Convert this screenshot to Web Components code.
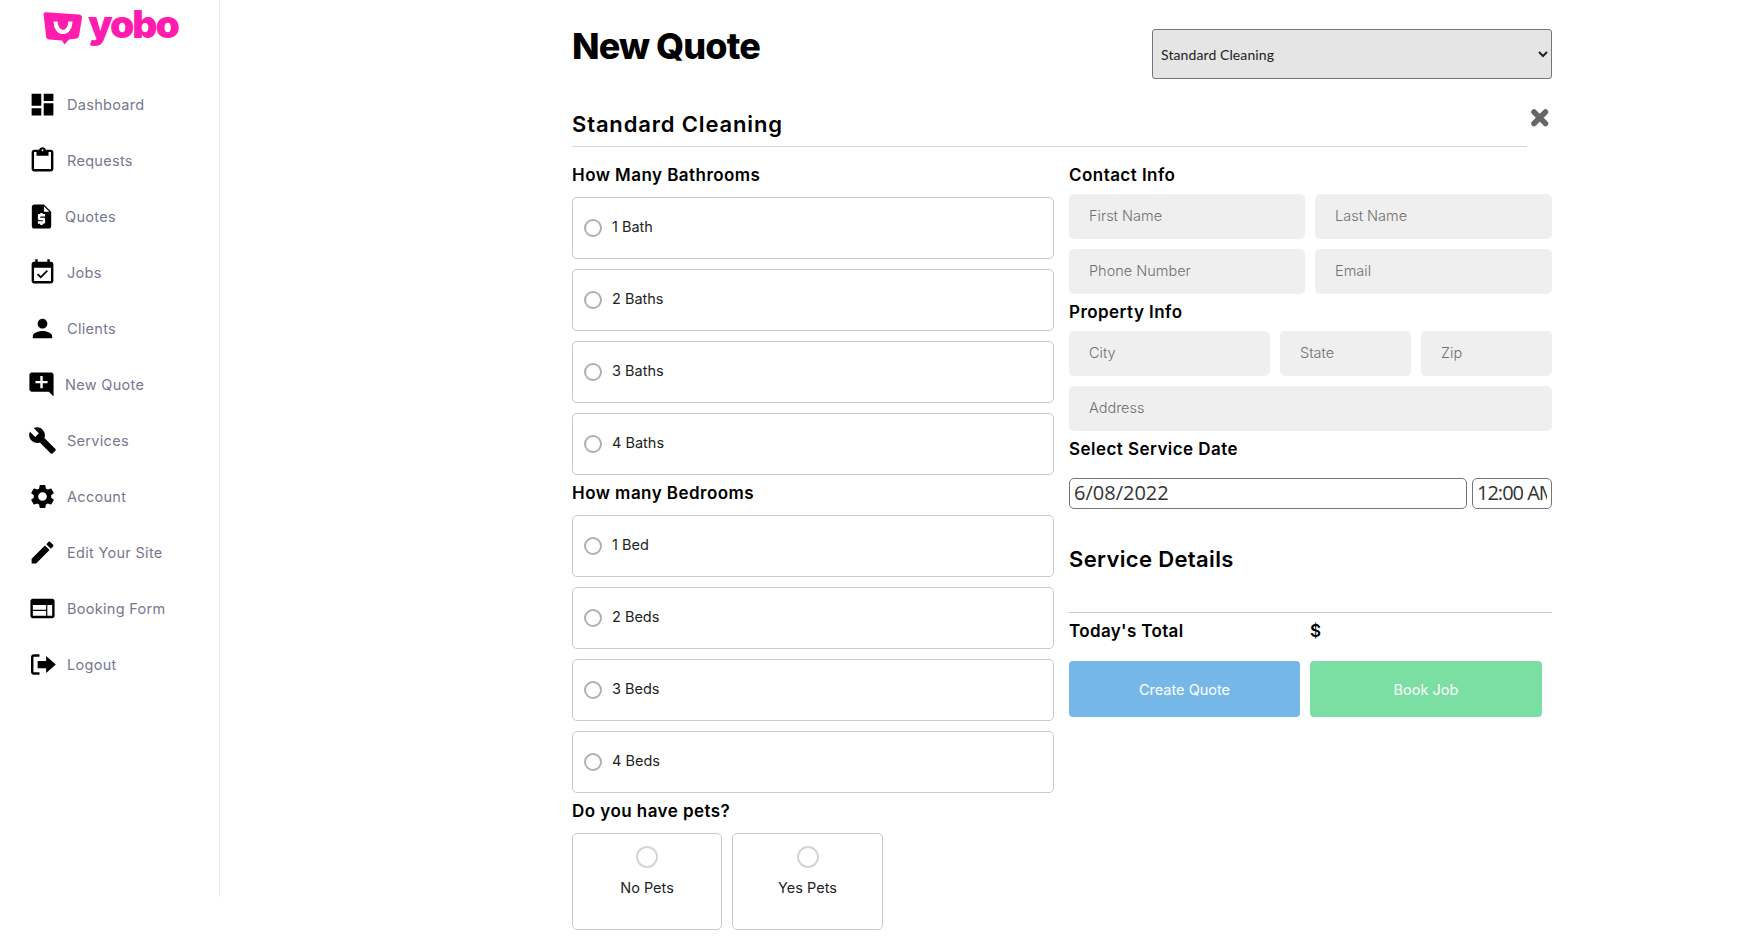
<!DOCTYPE html>
<html lang="en">
<head>
<meta charset="utf-8">
<title>New Quote</title>
<style>
  html, body { margin: 0; background: #fff; }
  body { display: flex; align-items: flex-start; font-family: Inter, "Liberation Sans", sans-serif; color: #000; }
</style>
</head>
<body>

<yb-sidebar>
  <yb-nav-item icon="dashboard">Dashboard</yb-nav-item>
  <yb-nav-item icon="requests">Requests</yb-nav-item>
  <yb-nav-item icon="quotes" tight>Quotes</yb-nav-item>
  <yb-nav-item icon="jobs">Jobs</yb-nav-item>
  <yb-nav-item icon="clients">Clients</yb-nav-item>
  <yb-nav-item icon="newquote" tight>New Quote</yb-nav-item>
  <yb-nav-item icon="services">Services</yb-nav-item>
  <yb-nav-item icon="account">Account</yb-nav-item>
  <yb-nav-item icon="edit">Edit Your Site</yb-nav-item>
  <yb-nav-item icon="booking">Booking Form</yb-nav-item>
  <yb-nav-item icon="logout">Logout</yb-nav-item>
</yb-sidebar>

<yb-quote-page>
  <yb-quote-header>New Quote</yb-quote-header>
  <yb-section-title>Standard Cleaning</yb-section-title>
  <yb-columns>
    <div slot="left">
      <yb-label first>How Many Bathrooms</yb-label>
      <yb-option>1 Bath</yb-option>
      <yb-option>2 Baths</yb-option>
      <yb-option>3 Baths</yb-option>
      <yb-option last>4 Baths</yb-option>
      <yb-label>How many Bedrooms</yb-label>
      <yb-option>1 Bed</yb-option>
      <yb-option>2 Beds</yb-option>
      <yb-option>3 Beds</yb-option>
      <yb-option last>4 Beds</yb-option>
      <yb-label>Do you have pets?</yb-label>
      <yb-pets>
        <yb-pet-card>No Pets</yb-pet-card>
        <yb-pet-card>Yes Pets</yb-pet-card>
      </yb-pets>
    </div>
    <div slot="right">
      <yb-label first tight>Contact Info</yb-label>
      <yb-field-row cols="236px 237px">
        <yb-field>First Name</yb-field>
        <yb-field>Last Name</yb-field>
        <yb-field>Phone Number</yb-field>
        <yb-field>Email</yb-field>
      </yb-field-row>
      <yb-label tight>Property Info</yb-label>
      <yb-field-row cols="201px 131px 131px">
        <yb-field>City</yb-field>
        <yb-field>State</yb-field>
        <yb-field>Zip</yb-field>
        <yb-field wide>Address</yb-field>
      </yb-field-row>
      <yb-label tight>Select Service Date</yb-label>
      <yb-date-row></yb-date-row>
      <yb-summary></yb-summary>
    </div>
  </yb-columns>
</yb-quote-page>

<script>
// iconos del menu lateral
const ICONS = {
  dashboard: 'M3 13h8V3H3v10zm0 8h8v-6H3v6zm10 0h8V11h-8v10zm0-18v6h8V3h-8z',
  requests: 'M19 3h-4.18C14.4 1.84 13.3 1 12 1s-2.4.84-2.82 2H5c-1.1 0-2 .9-2 2v14c0 1.1.9 2 2 2h14c1.1 0 2-.9 2-2V5c0-1.1-.9-2-2-2zm-7-.25c.41 0 .75.34.75.75s-.34.75-.75.75-.75-.34-.75-.75.34-.75.75-.75zM19 19H5V5h2v3h10V5h2v14z',
  quotes: 'M14 2H6c-1.1 0-1.99.9-1.99 2L4 20c0 1.1.89 2 1.99 2H18c1.1 0 2-.9 2-2V8l-6-6zm1 10h-4v1h3c.55 0 1 .45 1 1v3c0 .55-.45 1-1 1h-1v1h-2v-1H9v-2h4v-1h-3c-.55 0-1-.45-1-1v-3c0-.55.45-1 1-1h1V9h2v1h2v2zm-1-4V3.5L18.5 8H14z',
  jobs: 'M16.53 11.06L15.47 10l-4.88 4.88-2.12-2.12-1.06 1.06L10.59 17l5.94-5.94zM19 3h-1V1h-2v2H8V1H6v2H5c-1.11 0-1.99.9-1.99 2L3 19c0 1.1.89 2 2 2h14c1.1 0 2-.9 2-2V5c0-1.1-.9-2-2-2zm0 16H5V8h14v11z',
  clients: 'M12 12c2.21 0 4-1.79 4-4s-1.79-4-4-4-4 1.79-4 4 1.79 4 4 4zm0 2c-2.67 0-8 1.34-8 4v2h16v-2c0-2.66-5.33-4-8-4z',
  newquote: 'M21.99 4c0-1.1-.89-2-1.99-2H4c-1.1 0-2 .9-2 2v12c0 1.1.9 2 2 2h14l4 4-.01-18zM17 11h-4v4h-2v-4H7V9h4V5h2v4h4v2z',
  services: 'M22.7 19l-9.1-9.1c.9-2.3.4-5-1.5-6.9-2-2-5-2.4-7.4-1.3L9 6 6 9 1.6 4.7C.4 7.1.9 10.1 2.9 12.1c1.9 1.9 4.6 2.4 6.9 1.5l9.1 9.1c.4.4 1 .4 1.4 0l2.3-2.3c.5-.4.5-1.1.1-1.4z',
  account: 'M19.14 12.94c.04-.3.06-.61.06-.94 0-.32-.02-.64-.07-.94l2.03-1.58c.18-.14.23-.41.12-.61l-1.92-3.32c-.12-.22-.37-.29-.59-.22l-2.39.96c-.5-.38-1.03-.7-1.62-.94l-.36-2.54c-.04-.24-.24-.41-.48-.41h-3.84c-.24 0-.43.17-.47.41l-.36 2.54c-.59.24-1.13.57-1.62.94l-2.39-.96c-.22-.08-.47 0-.59.22L2.74 8.87c-.12.21-.08.47.12.61l2.03 1.58c-.05.3-.09.63-.09.94s.02.64.07.94l-2.03 1.58c-.18.14-.23.41-.12.61l1.92 3.32c.12.22.37.29.59.22l2.39-.96c.5.38 1.03.7 1.62.94l.36 2.54c.05.24.24.41.48.41h3.84c.24 0 .44-.17.47-.41l.36-2.54c.59-.24 1.13-.56 1.62-.94l2.39.96c.22.08.47 0 .59-.22l1.92-3.32c.12-.22.07-.47-.12-.61l-2.01-1.58zM12 15.6c-1.98 0-3.6-1.62-3.6-3.6s1.62-3.6 3.6-3.6 3.6 1.62 3.6 3.6-1.62 3.6-3.6 3.6z',
  edit: 'M3 17.25V21h3.75L17.81 9.94l-3.75-3.75L3 17.25zM20.71 7.04c.39-.39.39-1.02 0-1.41l-2.34-2.34c-.39-.39-1.02-.39-1.41 0l-1.83 1.83 3.75 3.75 1.83-1.83z',
  booking: 'M20 4H4c-1.1 0-1.99.9-1.99 2L2 18c0 1.1.9 2 2 2h16c1.1 0 2-.9 2-2V6c0-1.1-.9-2-2-2zm-5 14H4v-4h11v4zm0-5H4V9h11v4zm5 5h-4V9h4v9z',
  logout: 'M9.5 3.5H5A2.5 2.5 0 0 0 2.500 6v12A2.500 2.500 0 0 0 5 20.500h4.500v-2H5a.5.5 0 0 1-.5-.5V6a.5.5 0 0 1 .5-.5h4.500zM15 5l8 7-8 7v-4H8V9h7z'
};

function makeShadow(el, html) {
  el.attachShadow({ mode: 'open' }).innerHTML = html;
}

class YbSidebar extends HTMLElement {
  constructor() {
    super();
    makeShadow(this, `
      <style>
        :host { display: block; flex: none; width: 219px; height: 897px; border-right: 1px solid #eeeeee; box-sizing: content-box; }
        .logo { display: flex; align-items: flex-start; height: 66px; padding: 10px 0 0 43px; color: #ff1cae; }
        svg { display: block; flex: none; }
        .word { font: 900 39px/36px Inter, "Liberation Sans", sans-serif; letter-spacing: -2.100px; margin-left: 5px; margin-top: -4px; }
        nav { display: flex; flex-direction: column; }
      </style>
      <div class="logo">
        <svg width="40" height="36" viewBox="0 0 40 36">
          <path fill="#ff1cae" d="M0.500 4 Q0.500 2 3 2.200 L36 4.500 Q39.500 5 39 8 L36 26 Q35.500 28.500 32 28.800 L26 29.500 L21.500 34.500 L19 30.500 L6 29.500 Q3.500 29.200 3.200 27 Z"/>
          <path fill="none" stroke="#fff" stroke-width="4.200" d="M12.500 11.500 C13 25.500 27 25.500 27.500 11.500"/>
        </svg>
        <span class="word">yobo</span>
      </div>
      <nav><slot></slot></nav>
    `);
  }
}

class YbNavItem extends HTMLElement {
  constructor() {
    super();
    const tight = this.hasAttribute('tight');
    makeShadow(this, `
      <style>
        :host { display: flex; align-items: center; height: 56px; padding-left: 28px; color: #77778f; font: 400 14.500px Inter, "Liberation Sans", sans-serif; letter-spacing: .3px; }
        svg { display: block; flex: none; width: 29px; height: 29px; fill: #000; margin: 0 ${tight ? 9 : 10}px 0 ${tight ? -1 : 0}px; }
      </style>
      <svg viewBox="0 0 24 24"><path d="${ICONS[this.getAttribute('icon')]}"/></svg>
      <slot></slot>
    `);
  }
}

class YbQuotePage extends HTMLElement {
  constructor() {
    super();
    makeShadow(this, `
      <style>
        :host { display: block; flex: none; width: 980px; margin-left: 352px; }
      </style>
      <slot></slot>
    `);
  }
}

class YbQuoteHeader extends HTMLElement {
  constructor() {
    super();
    makeShadow(this, `
      <style>
        :host { display: flex; justify-content: space-between; align-items: flex-start; height: 79px; padding-top: 29px; box-sizing: border-box; }
        h1 { margin: -5px 0 0; font: 800 36px/44px Inter, "Liberation Sans", sans-serif; letter-spacing: -.9px; }
        select { width: 400px; height: 50px; padding-left: 4px; background: #e5e5e5; border: 1px solid #767676; border-radius: 3px; color: #222; font: 400 14px Lato, sans-serif; letter-spacing: .1px; }
      </style>
      <h1><slot></slot></h1>
      <select><option>Standard Cleaning</option></select>
    `);
  }
}

class YbSectionTitle extends HTMLElement {
  constructor() {
    super();
    makeShadow(this, `
      <style>
        :host { display: flex; align-items: flex-start; width: 980px; height: 68px; }
        .line { width: 955px; height: 67px; border-bottom: 1px solid #d6d6d6; box-sizing: content-box; }
        h2 { margin: 31px 0 0; font: 600 22px/28px Inter, "Liberation Sans", sans-serif; letter-spacing: .85px; }
        svg { flex: none; margin: 29px 0 0 3px; }
      </style>
      <div class="line"><h2><slot></slot></h2></div>
      <svg width="20" height="20" viewBox="0 0 20 20">
        <path fill="none" stroke="#666" stroke-width="5.500" stroke-linecap="round" d="M4 4 L15.500 15.500 M15.500 4 L4 15.500"/>
      </svg>
    `);
  }
}

class YbColumns extends HTMLElement {
  constructor() {
    super();
    makeShadow(this, `
      <style>
        :host { display: grid; grid-template-columns: 482px 483px; column-gap: 15px; }
      </style>
      <slot name="left"></slot>
      <slot name="right"></slot>
    `);
  }
}

class YbLabel extends HTMLElement {
  constructor() {
    super();
    const first = this.hasAttribute('first');
    const tight = this.hasAttribute('tight');
    makeShadow(this, `
      <style>
        :host { display: block; font: 600 17px/24px Inter, "Liberation Sans", sans-serif; letter-spacing: .45px; margin-top: ${first ? 16 : 6}px; margin-bottom: ${tight ? 7 : 10}px; }
      </style>
      <slot></slot>
    `);
  }
}

class YbOption extends HTMLElement {
  constructor() {
    super();
    makeShadow(this, `
      <style>
        :host { display: flex; align-items: center; height: 62px; box-sizing: border-box; margin-bottom: 10px; padding-left: 11px; border: 1px solid #c9c9c9; border-radius: 5px; font: 400 14.500px Inter, "Liberation Sans", sans-serif; color: #222; }
        :host([last]) { margin-bottom: 0; }
        i { flex: none; width: 18px; height: 18px; box-sizing: border-box; border: 2px solid #b0b0b0; border-radius: 50%; margin-right: 10px; margin-top: -1px; }
        span { margin-top: -4px; }
      </style>
      <i></i><span><slot></slot></span>
    `);
  }
}

class YbPets extends HTMLElement {
  constructor() {
    super();
    makeShadow(this, `
      <style>
        :host { display: grid; grid-template-columns: 150px 151px; column-gap: 10px; }
      </style>
      <slot></slot>
    `);
  }
}

class YbPetCard extends HTMLElement {
  constructor() {
    super();
    makeShadow(this, `
      <style>
        :host { display: flex; flex-direction: column; align-items: center; height: 97px; box-sizing: border-box; padding-top: 12px; border: 1px solid #c9c9c9; border-radius: 5px; font: 400 14.500px Inter, "Liberation Sans", sans-serif; color: #222; }
        i { width: 22px; height: 22px; box-sizing: border-box; border: 2px solid #d4d4d4; border-radius: 50%; margin-bottom: 11px; }
      </style>
      <i></i><slot></slot>
    `);
  }
}

class YbFieldRow extends HTMLElement {
  constructor() {
    super();
    makeShadow(this, `
      <style>
        :host { display: grid; grid-template-columns: ${this.getAttribute('cols')}; gap: 10px 10px; }
      </style>
      <slot></slot>
    `);
  }
}

class YbField extends HTMLElement {
  constructor() {
    super();
    if (this.hasAttribute('wide')) this.style.gridColumn = '1 / -1';
    makeShadow(this, `
      <style>
        :host { display: flex; align-items: center; height: 45px; box-sizing: border-box; padding: 0 0 2px 20px; background: #efefef; border-radius: 5px; color: #707070; font: 300 14.500px Inter, "Liberation Sans", sans-serif; }
      </style>
      <slot></slot>
    `);
  }
}

class YbDateRow extends HTMLElement {
  constructor() {
    super();
    makeShadow(this, `
      <style>
        :host { display: grid; grid-template-columns: 398px 80px; column-gap: 5px; margin-top: 17px; }
        div { height: 31px; box-sizing: border-box; border: 1px solid #767676; border-radius: 5px; padding-left: 4px; overflow: hidden; white-space: nowrap; color: #333; font: 400 20px/27px "Open Sans", sans-serif; }
        .time span { display: block; width: 70px; overflow: hidden; letter-spacing: -1px; }
      </style>
      <div>6/08/2022</div>
      <div class="time"><span>12:00 AM</span></div>
    `);
  }
}

class YbSummary extends HTMLElement {
  constructor() {
    super();
    makeShadow(this, `
      <style>
        :host { display: block; }
        h2 { margin: 35px 0 0; font: 600 22px/30px Inter, "Liberation Sans", sans-serif; letter-spacing: .35px; }
        hr { height: 1px; margin: 38px 0 0; border: 0; background: #c4c4c4; }
        .total { display: grid; grid-template-columns: 241px auto; margin-top: 6px; font: 600 17px/24px Inter, "Liberation Sans", sans-serif; letter-spacing: .35px; }
        .actions { display: grid; grid-template-columns: 231px 232px; column-gap: 10px; margin-top: 18px; }
        button { height: 56px; border: 0; border-radius: 4px; color: #fff; font: 400 14.500px Inter, "Liberation Sans", sans-serif; }
        .blue { background: #75b8e8; }
        .green { background: #7bdfa4; }
      </style>
      <h2>Service Details</h2>
      <hr>
      <div class="total"><span>Today's Total</span><span>$</span></div>
      <div class="actions">
        <button class="blue">Create Quote</button>
        <button class="green">Book Job</button>
      </div>
    `);
  }
}

customElements.define('yb-sidebar', YbSidebar);
customElements.define('yb-nav-item', YbNavItem);
customElements.define('yb-quote-page', YbQuotePage);
customElements.define('yb-quote-header', YbQuoteHeader);
customElements.define('yb-section-title', YbSectionTitle);
customElements.define('yb-columns', YbColumns);
customElements.define('yb-label', YbLabel);
customElements.define('yb-option', YbOption);
customElements.define('yb-pets', YbPets);
customElements.define('yb-pet-card', YbPetCard);
customElements.define('yb-field-row', YbFieldRow);
customElements.define('yb-field', YbField);
customElements.define('yb-date-row', YbDateRow);
customElements.define('yb-summary', YbSummary);
</script>
</body>
</html>
